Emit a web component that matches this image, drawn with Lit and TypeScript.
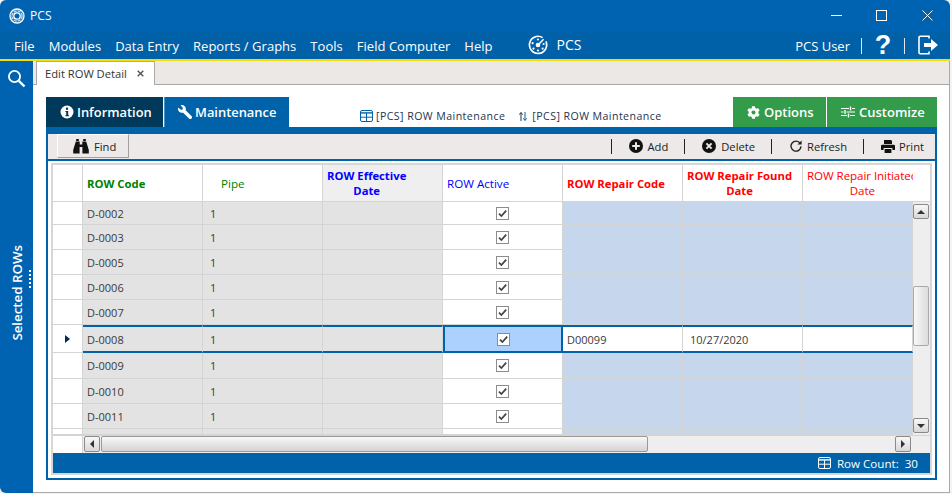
import { LitElement, html, css } from "lit";
import { customElement } from "lit/decorators.js";

const WRENCH = "M507.73 109.1c-2.24-9.03-13.54-12.09-20.12-5.51l-74.36 74.36-67.88-11.31-11.31-67.88 74.36-74.36c6.62-6.62 3.43-17.9-5.66-20.16-47.38-11.74-99.55.91-136.58 37.93-39.64 39.64-50.55 97.1-34.05 147.2L18.74 402.76c-24.99 24.99-24.99 65.51 0 90.5 24.99 24.99 65.51 24.99 90.5 0l213.21-213.21c50.12 16.71 107.47 5.68 147.37-34.22 37.07-37.07 49.7-89.32 37.91-136.73z";
const COG = "M487.4 315.7l-42.6-24.6c4.3-23.2 4.3-47 0-70.2l42.6-24.6c4.9-2.8 7.1-8.6 5.5-14-11.1-35.6-30-67.8-54.7-94.6-3.8-4.1-10-5.1-14.8-2.3L380.8 110c-17.9-15.4-38.5-27.3-60.8-35.1V25.8c0-5.6-3.9-10.5-9.4-11.7-36.7-8.2-74.3-7.8-109.2 0-5.5 1.2-9.4 6.1-9.4 11.7V75c-22.2 7.9-42.8 19.8-60.8 35.1L88.7 85.5c-4.9-2.8-11-1.9-14.8 2.3-24.7 26.7-43.6 58.9-54.7 94.6-1.7 5.4.6 11.2 5.5 14L67.3 221c-4.3 23.2-4.3 47 0 70.2l-42.6 24.6c-4.9 2.8-7.1 8.6-5.5 14 11.1 35.6 30 67.8 54.7 94.6 3.8 4.1 10 5.1 14.8 2.3l42.6-24.6c17.9 15.4 38.5 27.3 60.8 35.1v49.2c0 5.6 3.9 10.5 9.4 11.7 36.7 8.2 74.3 7.8 109.2 0 5.5-1.2 9.4-6.1 9.4-11.7v-49.2c22.2-7.9 42.8-19.8 60.8-35.1l42.6 24.6c4.9 2.8 11 1.9 14.8-2.3 24.7-26.7 43.6-58.9 54.7-94.6 1.5-5.5-.7-11.3-5.6-14.1zM256 336c-44.1 0-80-35.9-80-80s35.9-80 80-80 80 35.9 80 80-35.9 80-80 80z";

const tableIcon = (c: string, w = 13, h = 12) => html`<svg width=${w} height=${h} viewBox="0 0 13 12">
  <rect x="0.5" y="0.5" width="12" height="11" rx="1.5" fill="none" stroke=${c}/>
  <path d="M0.5 2.2h12V3.6h-12z" fill=${c}/><path d="M0.5 7.2h12M6.5 3v8.5" stroke=${c} fill="none"/></svg>`;

const logoSmall = html`<svg width="16" height="16" viewBox="0 0 16 16" fill="none" stroke="#fff">
  <circle cx="8" cy="8" r="7" stroke-width="1.3"/>
  <circle cx="8" cy="8" r="3.2" stroke-width="1.3"/>
  <circle cx="8" cy="8" r="5.1" stroke-width="1.5" stroke-dasharray="3.2 .8" stroke-opacity=".75"/></svg>`;

const logoMenu = html`<svg width="20" height="20" viewBox="0 0 20 20" fill="none" stroke="#fff">
  <path d="M14.6 2.6A8.6 8.6 0 1 0 17.9 6.4" stroke-width="1.7"/>
  <path d="M10 10L15.6 4.2" stroke-width="1.5"/>
  <circle cx="10" cy="10" r="2.3" fill="#fff" stroke="none"/>
  <g fill="#fff" stroke="none"><circle cx="10" cy="4.5" r="1.1"/><circle cx="4.6" cy="8.2" r="1.1"/><circle cx="5.5" cy="13.6" r="1.1"/><circle cx="10" cy="15.5" r="1.1"/><circle cx="14.6" cy="13.6" r="1.1"/><circle cx="15.6" cy="9" r="1.1"/></g></svg>`;

type Row = { code: string; cls: string; sel?: boolean };
const rows: Row[] = [
  { code: "D-0002", cls: "h23" },
  { code: "D-0003", cls: "h25" },
  { code: "D-0005", cls: "h25" },
  { code: "D-0006", cls: "h25" },
  { code: "D-0007", cls: "h25" },
  { code: "D-0008", cls: "h28", sel: true },
  { code: "D-0009", cls: "h26" },
  { code: "D-0010", cls: "h25" },
  { code: "D-0011", cls: "h25" },
  { code: "", cls: "h6" },
];

@customElement("app-root")
export class AppRoot extends LitElement {
  static styles = css`
    :host { display: block; width: 952px; height: 494px; background: #f4f4f4; overflow: hidden;
      font-family: "Open Sans", "Noto Sans", sans-serif; }
    * { box-sizing: border-box; }
    .win { width: 950px; height: 493px; display: flex; flex-direction: column; background: #0063b1;
      border-radius: 6px 6px 0 6px; overflow: hidden; }
    .title { height: 31px; flex: none; display: flex; align-items: center; padding-left: 9px; color: #fff; font-size: 12px; }
    .title .name { margin-left: 5px; letter-spacing: .1px; }
    .controls { margin-left: auto; display: flex; }
    .controls span { width: 45.5px; height: 31px; display: flex; align-items: center; justify-content: center; }
    .menu { height: 30px; flex: none; display: flex; align-items: center; background: #0061a8; border-bottom: 2px solid #f6dc08;
      color: #fff; font-size: 13px; padding: 1px 0 0 14px; }
    .menu .items { display: flex; gap: 14px; letter-spacing: .03px; }
    .brand { display: flex; align-items: center; margin-left: 35px; font-size: 14px; gap: 9px; margin-top: -2px; }
    .right { margin-left: auto; display: flex; align-items: center; }
    .sep { width: 1px; height: 16px; background: #dfe9f2; }
    .user { margin-right: 11px; }
    .q { font-family: "Liberation Sans", sans-serif; font-weight: 700; font-size: 27px; width: 42px; text-align: center; line-height: 28px; margin-top: -2px; }
    .logout { margin: -2px 11px 0 13px; display: flex; }
    .body { flex: 1; display: flex; min-height: 0; }
    .side { width: 33px; flex: none; position: relative; display: flex; flex-direction: column; align-items: center; color: #fff; }
    .search { margin-top: 8px; display: flex; }
    .vert { writing-mode: vertical-rl; transform: rotate(180deg); font-size: 13.3px; font-weight: 600; margin-top: 157px; margin-left: 1px; line-height: 16px; white-space: nowrap; }
    .dots { position: absolute; top: 209px; left: 29px; width: 2px; height: 18px;
      background: repeating-linear-gradient(#fff 0 2px, transparent 2px 4px); }
    .main { flex: 1; min-width: 0; display: flex; flex-direction: column; background: #fff; border-right: 1px solid #a9a9a9; border-bottom: 1px solid #a9a9a9; }
    .strip { height: 24px; flex: none; background: #ece8e6; border-bottom: 1px solid #aaa; padding-left: 3px; display: flex; }
    .doc { width: 119px; height: 24px; background: #fff; border: 1px solid #aaa; border-bottom: none; display: flex; align-items: center;
      font-size: 11.2px; color: #333; padding-left: 8px; gap: 10px; }
    .content { flex: 1; padding: 12px 13px; min-height: 0; }
    .panel { width: 891px; height: 383px; display: flex; flex-direction: column; }
    .phead { height: 30px; flex: none; display: flex; }
    .ptab { height: 30px; display: flex; align-items: center; color: #fff; font-size: 12.9px; font-weight: 600; }
    .info { width: 117px; background: #00395a; padding-left: 14px; gap: 3px; }
    .maint { width: 125px; background: #0063a9; padding-left: 13px; border-left: 1px solid #4d93c4; margin-left: 1px; gap: 3px; }
    .plabels { flex: 1; display: flex; align-items: flex-end; padding: 0 0 4px 71px; font-size: 10.6px; color: #26344c; letter-spacing: .44px; height: 30px; }
    .plabels .lab { display: flex; align-items: center; gap: 3px; }
    .plabels .lab + .lab { margin-left: 14px; gap: 5px; }
    .gbtn { height: 30px; background: #339c4b; display: flex; align-items: center; color: #fff; font-size: 13px; font-weight: 600; gap: 4px; }
    .opt { width: 93px; padding-left: 14px; }
    .cust { width: 110px; padding-left: 14px; margin-left: 1px; }
    .bar { height: 7px; flex: none; background: #0063a9; }
    .frame { flex: 1; min-height: 0; border: 2px solid #0063a9; border-top: none; display: flex; flex-direction: column; }
    .tools { height: 27px; flex: none; background: #ece9e8; border-bottom: 2px solid #0063a9; display: flex; align-items: flex-start; font-size: 11.2px; color: #222; }
    .find { width: 72px; height: 24px; margin-left: 9px; background: #ece9e8; border-right: 1px solid #a0a0a0; border-bottom: 1px solid #a0a0a0; border-left: 1px solid #fff; border-top: 1px solid #fff;
      display: flex; align-items: center; padding-left: 15px; gap: 5px; font-weight: 500; }
    .acts { margin-left: auto; display: flex; align-items: center; height: 24px; padding-right: 11px; }
    .acts .s { width: 1px; height: 15px; background: #222; }
    .act { display: flex; align-items: center; gap: 4px; }
    .a1 { margin-left: 17px; margin-right: 16px; }
    .a2 { margin-left: 17px; margin-right: 16px; gap: 5px; }
    .a3 { margin-left: 18px; margin-right: 16px; gap: 5px; }
    .a4 { margin-left: 17px; }
    .gridwrap { flex: 1; min-height: 0; padding: 2px 3px 3px 3px; }
    .grid { height: 100%; border: 2px solid #d7d7d7; display: flex; flex-direction: column; background: #fff; width: 881px; }
    .hrow { height: 37px; flex: none; display: flex; border-bottom: 1px solid #d4d4d4; font-size: 11.6px; }
    .hc { height: 36px; border-right: 1px solid #d4d4d4; display: flex; align-items: center; flex: none; padding-left: 4px; line-height: 15px; }
    .w30 { width: 30px; } .w120 { width: 120px; } .w110 { width: 110px; }
    .hc .ct { text-align: center; white-space: nowrap; }
    .b { font-weight: 700; font-size: 11.3px; }
    .green { color: #008000; } .blue { color: #0000ff; } .red { color: #ff0000; }
    .pipe { padding-left: 18px; }
    .eff { background: #efefef; }
    .clip { overflow: hidden; border-right: none; letter-spacing: -.08px; }
    .mid { flex: 1; min-height: 0; display: flex; }
    .rows { width: 860px; flex: none; }
    .row { display: flex; overflow: hidden; font-size: 11px; color: #3a3a3a; }
    .h23 { height: 23px; } .h25 { height: 25px; } .h26 { height: 26px; } .h28 { height: 28px; } .h6 { height: 6px; }
    .c { flex: none; border-right: 1px solid #d4d4d4; border-bottom: 1px solid #d4d4d4; display: flex; align-items: center; padding-left: 4px; }
    .idx { background: #fff; justify-content: center; padding: 0; }
    .lock { background: #e3e3e3; }
    .num { padding-left: 7px; }
    .act-c { background: #fff; justify-content: center; padding: 0; }
    .rep { background: #c6d6ec; }
    .selc { border-top: 2px solid #0063a9; border-bottom: 2px solid #0063a9; }
    .selc.act-c { background: #add1ff; border-left: 2px solid #0063a9; border-right: 2px solid #0063a9; }
    .selc.rep { background: #fff; }
    .vs { width: 17px; flex: none; background: #eee; display: flex; flex-direction: column; padding: 2px 1px 0 0; }
    .sb { background: linear-gradient(#f8f8f8, #d8d8d8); border: 1px solid #8a8a8a; border-radius: 2px; display: flex; align-items: center; justify-content: center; flex: none; }
    .up, .down { width: 16px; height: 15px; }
    .thumb-v { width: 16px; height: 60px; margin-top: 67px; background: linear-gradient(90deg, #f8f8f8, #dcdcdc); border: 1px solid #aaa; border-radius: 2px; flex: none; }
    .down { margin-top: 72px; }
    .hs { height: 18px; flex: none; display: flex; border-top: 1px solid #d4d4d4; }
    .hs .blank { width: 30px; flex: none; border-right: 1px solid #d4d4d4; }
    .hs .track { flex: 1; background: #eee; display: flex; padding: 0 0 0 1px; }
    .hs .sb { width: 16px; height: 16px; }
    .thumb-h { width: 547px; height: 16px; margin-left: 1px; background: linear-gradient(#f8f8f8, #d4d4d4); border: 1px solid #999; border-radius: 2px; flex: none; }
    .right-b { margin-left: 247px; }
    .status { height: 20px; flex: none; background: #0063a9; color: #fff; font-size: 11.6px; display: flex; align-items: center; justify-content: flex-end; padding-right: 12px; gap: 6px; }
  `;

  private chk() {
    return html`<svg width="13" height="13" viewBox="0 0 13 13">
      <rect x=".5" y=".5" width="12" height="12" fill="#fff" stroke="#8c8c8c"/>
      <path d="M3 6.6l2.4 2.5L10.2 3.6" fill="none" stroke="#444" stroke-width="1.7"/></svg>`;
  }

  private row(r: Row) {
    const s = r.sel ? "selc" : "";
    return html`<div class="row ${r.cls}">
      <div class="c idx w30">${r.sel ? html`<svg width="5" height="8" viewBox="0 0 5 8"><path d="M0 0l5 4-5 4z" fill="#00285a"/></svg>` : ""}</div>
      <div class="c lock w120 ${s}">${r.code}</div>
      <div class="c lock num w120 ${s}">${r.code ? "1" : ""}</div>
      <div class="c lock w120 ${s}"></div>
      <div class="c act-c w120 ${s}">${r.code ? this.chk() : ""}</div>
      <div class="c rep w120 ${s}">${r.sel ? "D00099" : ""}</div>
      <div class="c rep num w120 ${s}">${r.sel ? "10/27/2020" : ""}</div>
      <div class="c rep w110 ${s}"></div>
    </div>`;
  }

  render() {
    return html`<div class="win">
      <div class="title">${logoSmall}<span class="name">PCS</span>
        <div class="controls">
          <span><svg width="11" height="11" viewBox="0 0 11 11"><path d="M0 5.5h11" stroke="#fff"/></svg></span>
          <span><svg width="11" height="11" viewBox="0 0 11 11"><rect x=".5" y=".5" width="10" height="10" fill="none" stroke="#fff"/></svg></span>
          <span><svg width="11" height="11" viewBox="0 0 11 11"><path d="M.5.5l10 10M10.5.5l-10 10" stroke="#fff"/></svg></span>
        </div>
      </div>
      <div class="menu">
        <div class="items"><span>File</span><span>Modules</span><span>Data Entry</span><span>Reports / Graphs</span><span>Tools</span><span>Field Computer</span><span>Help</span></div>
        <div class="brand">${logoMenu}<span>PCS</span></div>
        <div class="right">
          <span class="user">PCS User</span><span class="sep"></span>
          <span class="q">?</span><span class="sep"></span>
          <span class="logout"><svg width="21" height="20" viewBox="0 0 21 20" fill="none">
            <path d="M11 3.5V1.2H2.2a1.2 1.2 0 0 0-1.2 1.2v15.2a1.2 1.2 0 0 0 1.2 1.2H11v-2.3" stroke="#fff" stroke-width="1.6"/>
            <path d="M6 8h7V4l7 6-7 6v-4H6z" fill="#fff"/></svg></span>
        </div>
      </div>
      <div class="body">
        <div class="side">
          <div class="search"><svg width="19" height="19" viewBox="0 0 19 19" fill="none" stroke="#fff"><circle cx="7.5" cy="7.5" r="5.6" stroke-width="1.8"/><path d="M11.8 11.8L17.5 17.5" stroke-width="2.4"/></svg></div>
          <div class="vert">Selected ROWs</div>
          <div class="dots"></div>
        </div>
        <div class="main">
          <div class="strip"><div class="doc"><span>Edit ROW Detail</span>
            <svg width="7" height="7" viewBox="0 0 7 7"><path d="M.7.7l5.6 5.6M6.3.7L.7 6.3" stroke="#555" stroke-width="1.4"/></svg></div></div>
          <div class="content">
            <div class="panel">
              <div class="phead">
                <div class="ptab info"><svg width="14" height="14" viewBox="0 0 14 14"><circle cx="7" cy="7" r="6.5" fill="#fff"/><rect x="6" y="2.6" width="2.1" height="2.2" fill="#00395a"/><path d="M5.4 6h2.8v4.2h.9v1.1H5.3v-1.1h.9V7.1h-.8z" fill="#00395a"/></svg><span>Information</span></div>
                <div class="ptab maint"><svg width="14" height="14" viewBox="0 0 512 512"><path d=${WRENCH} fill="#fff" transform="matrix(-1 0 0 1 512 0)"/></svg><span>Maintenance</span></div>
                <div class="plabels">
                  <span class="lab">${tableIcon("#0063a9")}<span>[PCS] ROW Maintenance</span></span>
                  <span class="lab"><svg width="8" height="11" viewBox="0 0 8 11" fill="none"><path d="M2 10V2M.4 3.6L2 1.4l1.6 2.2" stroke="#333"/><path d="M6 1v8M4.4 7.4L6 9.6l1.6-2.2" stroke="#0063a9"/></svg><span>[PCS] ROW Maintenance</span></span>
                </div>
                <div class="gbtn opt"><svg width="13" height="13" viewBox="0 0 512 512"><path d=${COG} fill="#fff"/></svg><span>Options</span></div>
                <div class="gbtn cust"><svg width="14" height="12" viewBox="0 0 14 12" fill="none" stroke="#fff"><path d="M0 2.5h8M11 2.5h3M0 6h2.5M5.5 6H14M0 9.5h6M9 9.5h5"/><path d="M9.5 .5v4M4 4v4M7.5 7.5v4" stroke-width="1.4"/></svg><span>Customize</span></div>
              </div>
              <div class="bar"></div>
              <div class="frame">
                <div class="tools">
                  <div class="find"><svg width="16" height="15" viewBox="0 0 16 15" fill="#111"><path d="M3.2 0h2.6v2H3.2zM10.2 0h2.6v2h-2.6zM2.8 2.6h3.9v3h2.6v-3h3.9l2.6 8.4v3.4H9.4V8H6.6v6.4H.2V11z"/></svg><span>Find</span></div>
                  <div class="acts">
                    <span class="s"></span>
                    <span class="act a1"><svg width="14" height="14" viewBox="0 0 14 14"><circle cx="7" cy="7" r="7" fill="#111"/><path d="M7 3.2v7.6M3.2 7h7.6" stroke="#ece9e8" stroke-width="2"/></svg><span>Add</span></span>
                    <span class="s"></span>
                    <span class="act a2"><svg width="14" height="14" viewBox="0 0 14 14"><circle cx="7" cy="7" r="7" fill="#111"/><path d="M4.4 4.4l5.2 5.2M9.6 4.4l-5.2 5.2" stroke="#ece9e8" stroke-width="2"/></svg><span>Delete</span></span>
                    <span class="s"></span>
                    <span class="act a3"><svg width="12" height="12" viewBox="0 0 12 12" fill="none"><path d="M10.2 3.4A5 5 0 1 0 11 6.4" stroke="#222" stroke-width="1.4"/><path d="M11.6 .4v4.2H7.4z" fill="#222"/></svg><span>Refresh</span></span>
                    <span class="s"></span>
                    <span class="act a4"><svg width="14" height="13" viewBox="0 0 14 13" fill="#111"><path d="M3 0h7l1 1v3H3zM1.2 4.8h11.6A1.2 1.2 0 0 1 14 6v4h-2.6V8H2.6v2H0V6a1.2 1.2 0 0 1 1.2-1.2zM3.6 9h6.8v4H3.6z"/></svg><span>Print</span></span>
                  </div>
                </div>
                <div class="gridwrap"><div class="grid">
                  <div class="hrow">
                    <div class="hc w30"></div>
                    <div class="hc w120 b green">ROW Code</div>
                    <div class="hc w120 green pipe">Pipe</div>
                    <div class="hc w120 b blue eff"><span class="ct">ROW Effective<br />Date</span></div>
                    <div class="hc w120 blue">ROW Active</div>
                    <div class="hc w120 b red">ROW Repair Code</div>
                    <div class="hc w120 b red"><span class="ct">ROW Repair Found<br />Date</span></div>
                    <div class="hc w110 red clip"><span class="ct">ROW Repair Initiated<br />Date</span></div>
                  </div>
                  <div class="mid">
                    <div class="rows">${rows.map((r) => this.row(r))}</div>
                    <div class="vs">
                      <div class="sb up"><svg width="8" height="4" viewBox="0 0 8 4"><path d="M0 4l4-4 4 4z" fill="#333"/></svg></div>
                      <div class="thumb-v"></div>
                      <div class="sb down"><svg width="8" height="4" viewBox="0 0 8 4"><path d="M0 0l4 4 4-4z" fill="#333"/></svg></div>
                    </div>
                  </div>
                  <div class="hs">
                    <div class="blank"></div>
                    <div class="track">
                      <div class="sb"><svg width="4" height="8" viewBox="0 0 4 8"><path d="M4 0L0 4l4 4z" fill="#333"/></svg></div>
                      <div class="thumb-h"></div>
                      <div class="sb right-b"><svg width="4" height="8" viewBox="0 0 4 8"><path d="M0 0l4 4-4 4z" fill="#333"/></svg></div>
                    </div>
                  </div>
                  <div class="status">${tableIcon("#fff")}<span>Row Count:</span><span>30</span></div>
                </div></div>
              </div>
            </div>
          </div>
        </div>
      </div>
    </div>`;
  }
}
